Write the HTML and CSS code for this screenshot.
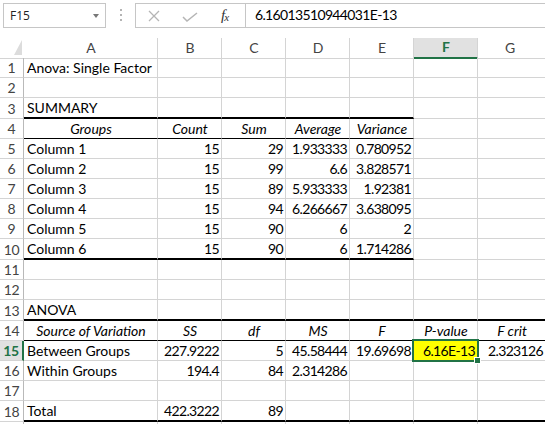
FILE: index.html
```html
<!DOCTYPE html>
<html lang="en">
<head>
    <meta charset="UTF-8">
    <title>Anova: Single Factor</title>
    <link rel="stylesheet" href="styles.css">
</head>
<body>
    <div class="fbar">
        <div class="namebox"><span>F15</span><span class="caret"></span></div>
        <div class="dots"><i></i><i></i><i></i></div>
        <div class="fbox">
            <div class="fbtns">
                <svg class="ic-x" width="12" height="12" viewBox="0 0 12 12"><path d="M1 1 L11 11 M11 1 L1 11" stroke="#b5b5b5" stroke-width="1.3" fill="none"/></svg>
                <svg class="ic-ok" width="16" height="10" viewBox="0 0 16 10"><path d="M1 5 L5 9 L15 1" stroke="#b5b5b5" stroke-width="1.5" fill="none"/></svg>
                <span class="fx">f<span>x</span></span>
            </div>
            <div class="ftext">6.16013510944031E-13</div>
        </div>
    </div>

    <div class="sheet">
        <div class="row hdr">
            <div class="corner"><svg width="24" height="20" viewBox="0 0 24 20"><polygon points="14,17 22,17 22,2" fill="#dcdcdc"/></svg></div>
            <div class="ch">A</div><div class="ch">B</div><div class="ch">C</div><div class="ch">D</div>
            <div class="ch">E</div><div class="ch cur">F</div><div class="ch">G</div>
        </div>

        <div class="row">
            <div class="rh">1</div><div class="c">Anova: Single Factor</div><div></div><div></div><div></div><div></div><div></div><div></div>
        </div>
        <div class="row">
            <div class="rh">2</div><div></div><div></div><div></div><div></div><div></div><div></div><div></div>
        </div>
        <div class="row tall">
            <div class="rh">3</div><div class="c tb">SUMMARY</div><div class="tb"></div><div class="tb"></div><div class="tb"></div><div class="tb"></div><div></div><div></div>
        </div>
        <div class="row">
            <div class="rh">4</div><div class="h bb">Groups</div><div class="h bb">Count</div><div class="h bb">Sum</div><div class="h bb">Average</div><div class="h bb">Variance</div><div></div><div></div>
        </div>
        <div class="row">
            <div class="rh">5</div><div class="c">Column 1</div><div class="n">15</div><div class="n">29</div><div class="n">1.933333</div><div class="n">0.780952</div><div></div><div></div>
        </div>
        <div class="row">
            <div class="rh">6</div><div class="c">Column 2</div><div class="n">15</div><div class="n">99</div><div class="n">6.6</div><div class="n">3.828571</div><div></div><div></div>
        </div>
        <div class="row">
            <div class="rh">7</div><div class="c">Column 3</div><div class="n">15</div><div class="n">89</div><div class="n">5.933333</div><div class="n">1.92381</div><div></div><div></div>
        </div>
        <div class="row">
            <div class="rh">8</div><div class="c">Column 4</div><div class="n">15</div><div class="n">94</div><div class="n">6.266667</div><div class="n">3.638095</div><div></div><div></div>
        </div>
        <div class="row">
            <div class="rh">9</div><div class="c">Column 5</div><div class="n">15</div><div class="n">90</div><div class="n">6</div><div class="n">2</div><div></div><div></div>
        </div>
        <div class="row tall">
            <div class="rh">10</div><div class="c tb">Column 6</div><div class="n tb">15</div><div class="n tb">90</div><div class="n tb">6</div><div class="n tb">1.714286</div><div></div><div></div>
        </div>
        <div class="row">
            <div class="rh">11</div><div></div><div></div><div></div><div></div><div></div><div></div><div></div>
        </div>
        <div class="row">
            <div class="rh">12</div><div></div><div></div><div></div><div></div><div></div><div></div><div></div>
        </div>
        <div class="row tall">
            <div class="rh">13</div><div class="c tb">ANOVA</div><div class="tb"></div><div class="tb"></div><div class="tb"></div><div class="tb"></div><div class="tb"></div><div class="tb"></div>
        </div>
        <div class="row">
            <div class="rh">14</div><div class="h bb">Source of Variation</div><div class="h bb">SS</div><div class="h bb">df</div><div class="h bb">MS</div><div class="h bb">F</div><div class="h bb">P-value</div><div class="h bb">F crit</div>
        </div>
        <div class="row">
            <div class="rh cur">15</div><div class="c">Between Groups</div><div class="n">227.9222</div><div class="n">5</div><div class="n">45.58444</div><div class="n">19.69698</div>
            <div class="n sel">6.16E-13<span class="selbox"></span><span class="handle"></span></div><div class="n">2.323126</div>
        </div>
        <div class="row">
            <div class="rh">16</div><div class="c">Within Groups</div><div class="n">194.4</div><div class="n">84</div><div class="n">2.314286</div><div></div><div></div><div></div>
        </div>
        <div class="row">
            <div class="rh">17</div><div></div><div></div><div></div><div></div><div></div><div></div><div></div>
        </div>
        <div class="row tall">
            <div class="rh">18</div><div class="c tb">Total</div><div class="n tb">422.3222</div><div class="n tb">89</div><div class="tb"></div><div class="tb"></div><div class="tb"></div><div class="tb"></div>
        </div>
        <div class="row">
            <div class="rh"></div><div></div><div></div><div></div><div></div><div></div><div></div><div></div>
        </div>
    </div>
</body>
</html>
```

FILE: styles.css
```css
body {
    margin: 0;
    width: 545px;
    height: 424px;
    overflow: hidden;
    background: #fff;
    color: #000;
    font-family: Lato, "Liberation Sans", sans-serif;
    font-size: 14px;
}

/* formula bar */
.fbar {
    display: flex;
    align-items: flex-start;
    height: 38px;
    padding-top: 3px;
    box-sizing: border-box;
}
.namebox {
    margin-left: 3px;
    width: 103px;
    height: 25px;
    box-sizing: border-box;
    border: 1px solid #c6c6c6;
    display: flex;
    align-items: center;
    justify-content: space-between;
    padding: 0 6px;
    font-family: "Open Sans", sans-serif;
    font-size: 12px;
    color: #222;
}
.caret {
    width: 0;
    height: 0;
    border-left: 3.5px solid transparent;
    border-right: 3.5px solid transparent;
    border-top: 4px solid #777;
}
.dots {
    width: 29px;
    display: flex;
    flex-direction: column;
    align-items: center;
    gap: 3px;
    padding-top: 6px;
}
.dots i {
    width: 2px;
    height: 2px;
    background: #b4b4b4;
}
.fbox {
    flex: 1;
    height: 25px;
    box-sizing: border-box;
    border: 1px solid #c6c6c6;
    border-right: none;
    display: flex;
}
.fbtns {
    width: 110px;
    box-sizing: border-box;
    border-right: 1px solid #c6c6c6;
    display: flex;
    align-items: center;
}
.ic-x {
    margin-left: 12px;
}
.ic-ok {
    margin-left: 22px;
    margin-top: 2px;
}
.fx {
    margin-left: 23px;
    font-family: "Liberation Serif", serif;
    font-style: italic;
    font-size: 15px;
    letter-spacing: -1px;
    color: #333;
}
.fx span {
    font-size: 11px;
    position: relative;
    top: 1px;
}
.ftext {
    padding-left: 9px;
    line-height: 22px;
    letter-spacing: -0.65px;
}

/* sheet */
.row {
    display: grid;
    grid-template-columns: 24px 134px 64px 64px 64px 64px 64px 1fr;
    height: 20px;
}
.row.tall {
    height: 21px;
}
.row > div {
    box-sizing: border-box;
    border-right: 1px solid #d4d4d4;
    border-bottom: 1px solid #d4d4d4;
    padding: 0 2px 0 3px;
    line-height: 19px;
    white-space: nowrap;
}
.row > div:last-child {
    border-right: none;
}
.c {
    text-align: left;
}
.n {
    text-align: right;
    letter-spacing: -0.65px;
}
.h {
    text-align: center;
    font-style: italic;
}
.row > .tb {
    border-bottom: 2px solid #000;
}
.row > .bb {
    border-bottom-color: #000;
}

.hdr > div {
    color: #444;
    text-align: center;
}
.hdr > .corner {
    padding: 0;
    border-right: none;
    line-height: 0;
}
.hdr > .ch:last-child {
    padding-right: 6px;
}
.hdr > .cur {
    background: #e1e1e1;
    color: #217346;
    font-weight: bold;
    border-bottom: 2px solid #217346;
    line-height: 18px;
}

.row > .rh {
    padding: 0;
    text-align: center;
    color: #444;
    letter-spacing: -0.3px;
    border-right-color: #b9b9b9;
}
.tall > .rh {
    padding-top: 1px;
}
.row > .rh.cur {
    background: #e1e1e1;
    color: #217346;
    font-weight: bold;
    border-right: 2px solid #217346;
}

.sel {
    position: relative;
    background: #ffff00;
}
.selbox {
    position: absolute;
    left: -2px;
    top: -2px;
    width: 67px;
    height: 23px;
    box-sizing: border-box;
    border: 2px solid #217346;
}
.handle {
    position: absolute;
    left: 61px;
    top: 17px;
    width: 5px;
    height: 5px;
    background: #217346;
    outline: 1px solid #fff;
    z-index: 2;
}
```
